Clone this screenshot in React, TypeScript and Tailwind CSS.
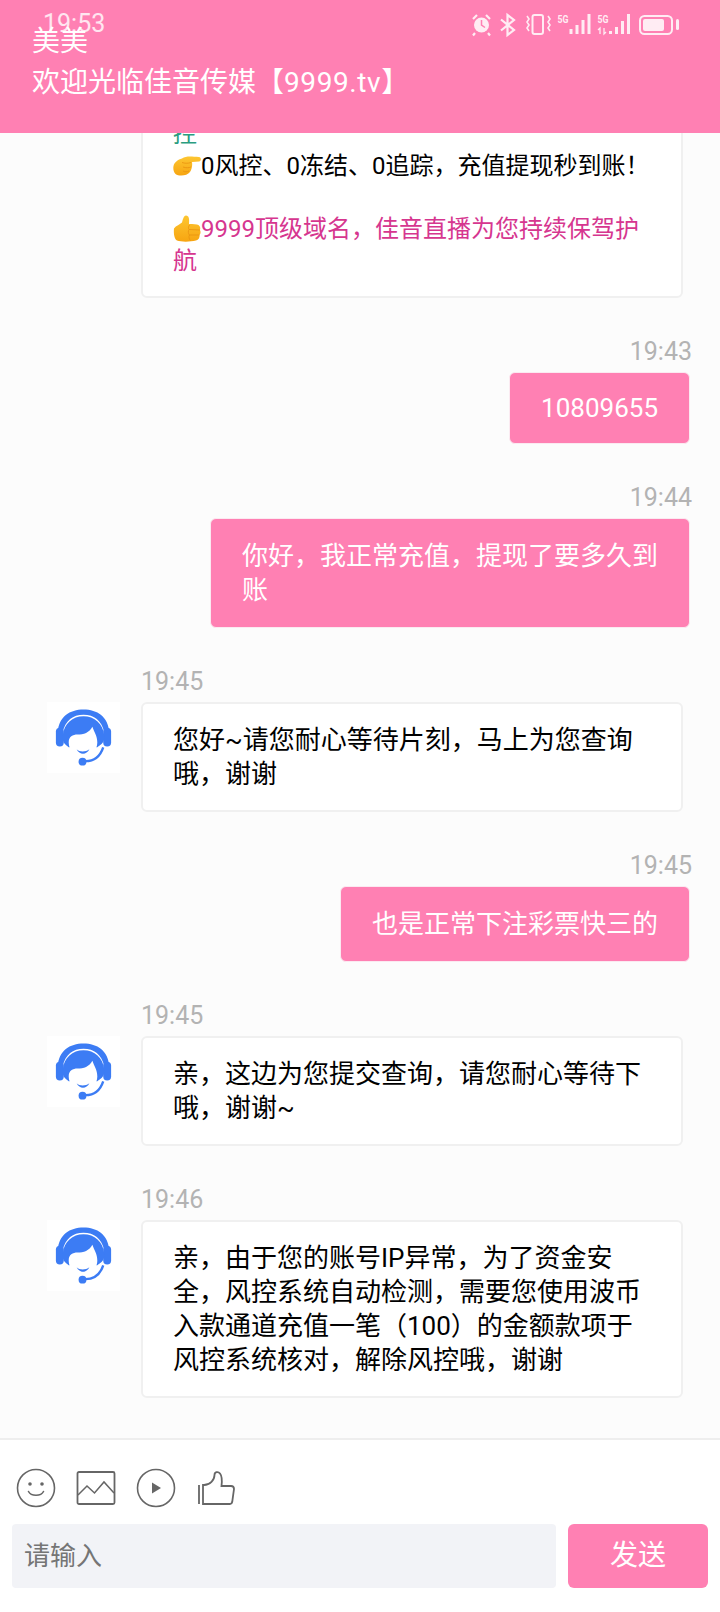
import { ReactNode } from 'react';

const font = "[font-family:Roboto,'Noto_Sans_CJK_SC',sans-serif]";

function StatusIcons() {
  return (
    <svg width="280" height="50" viewBox="0 0 280 50" fill="none" className="opacity-85">
      {/* alarm */}
      <circle cx="41.5" cy="25" r="7.5" fill="#fff" />
      <path d="M41.5 20v5l3.5 2.5" stroke="#ff80b3" strokeWidth="1.5" />
      <path d="M33 19l4-4M50 19l-4-4M35 33l-2 2.5M48 33l2 2.5" stroke="#fff" strokeWidth="2.2" />
      {/* bluetooth */}
      <path d="M61 19.500l13 10.500-6.500 5V15l6.500 5-13 10.500" stroke="#fff" strokeWidth="2.2" />
      {/* vibrate */}
      <rect x="92.500" y="15" width="10.500" height="19" rx="2" stroke="#fff" strokeWidth="2" />
      <path d="M87 16l2 3-2 3 2 3-2 3 2 3M108 16l2 3-2 3 2 3-2 3 2 3" stroke="#fff" strokeWidth="1.6" />
      {/* 5G */}
      <text x="117.500" y="23" fill="#fff" fontSize="11" fontWeight="700" fontFamily="Roboto, sans-serif" textLength="11" lengthAdjust="spacingAndGlyphs">5G</text>
      <path d="M129.500 29h3v5h-3zM135.500 25h3v9h-3zM141.500 20h3v14h-3zM147.500 14h3v20h-3z" fill="#fff" />
      <text x="157.500" y="23" fill="#fff" fontSize="11" fontWeight="700" fontFamily="Roboto, sans-serif" textLength="11" lengthAdjust="spacingAndGlyphs">5G</text>
      <path d="M160 34v-6l-2 2M164 28v6l2-2" stroke="#fff" strokeWidth="1.3" />
      <path d="M169 31h3v3h-3zM175 27h3v7h-3zM181 21h3v13h-3zM187 14h3v20h-3z" fill="#fff" />
      {/* battery */}
      <rect x="200" y="16" width="32" height="18" rx="4.500" stroke="#fff" strokeWidth="2" />
      <rect x="203" y="19" width="21" height="12" rx="2" fill="#fff" />
      <rect x="236" y="19" width="3" height="11" rx="1.500" fill="#fff" />
    </svg>
  );
}

function Avatar() {
  return (
    <div className="w-[73px] h-[71px] shrink-0 bg-white">
      <svg width="73" height="71" viewBox="0 0 72 72" fill="none">
        <path d="M10 30C11 15 22 7.500 36 7.500S61 15 62 30l-5 0C54 19 47 13 36 13S18 19 15 30Z" fill="#3c7cf4" />
        <rect x="8" y="26" width="8" height="19" rx="4" fill="#3c7cf4" />
        <rect x="56" y="26" width="8" height="19" rx="4" fill="#3c7cf4" />
        <path d="M15 34C16 22 25 14.500 36 14.500S56 22 57 34C58 42 52 44 50 46L21 46C19 44 14 42 15 34Z" fill="#3c7cf4" />
        <path d="M21 41C21 35 25 33 30 33C36 33 42 31 45 25C47 31 50 34 50 41C50 49 44 55 35.500 55S21 49 21 41Z" fill="#fff" />
        <path d="M29 48C32 51 38 51 42 48C39 54 32 54 29 48Z" fill="#3c7cf4" />
        <path d="M38 60C47 60 53 55 56 46" stroke="#3c7cf4" strokeWidth="2.400" />
        <circle cx="35" cy="60.500" r="4" fill="#3c7cf4" />
      </svg>
    </div>
  );
}

function PointEmoji() {
  return (
    <svg width="28" height="22" viewBox="0 0 28 22" className="inline-block align-[-2px]">
      <defs>
        <linearGradient id="pointFill" x1="0" y1="0" x2="0" y2="1">
          <stop offset="0" stopColor="#fdc631" />
          <stop offset="1" stopColor="#f7a511" />
        </linearGradient>
      </defs>
      <path d="M0.500 12C1.500 8 5 5.500 9 4.500C13 2 17 2.500 26 3C28.500 3.300 28.500 7.200 26 7.500L19 8C19.500 11 19 15 17 18C14 22 6 22.500 2.500 20C0.500 18 0 15 0.500 12Z" fill="url(#pointFill)" />
      <path d="M9 8.500C12 9.500 15 9.500 18 8.500M10 13C13 14 15.500 14 18 13M10 17C12 18 14 18 16 17" stroke="#e8920f" strokeWidth="0.800" fill="none" />
    </svg>
  );
}

function ThumbEmoji() {
  return (
    <svg width="28" height="27" viewBox="0 0 28 27" className="inline-block align-[-5px]">
      <defs>
        <linearGradient id="thumbFill" x1="0" y1="0" x2="0" y2="1">
          <stop offset="0" stopColor="#fdc631" />
          <stop offset="1" stopColor="#f7a511" />
        </linearGradient>
      </defs>
      <path d="M1 13.500C3 10.500 7 9.500 9 7.500C10 4 10.500 1 13 0.500C16 0.500 16.500 4 16 9C20 9 24 9 25.500 10C27.500 11.500 27.500 13.500 27 15C28 17 27.500 19 26.500 20C27 22.500 25.500 25 23 25.500C17 27 8 27 4 25.500C1 24 0.500 17 1 13.500Z" fill="url(#thumbFill)" />
      <path d="M16.500 10C15.500 11.500 15 13 16 14.500L27 15M16 14.500C15 16 15 18.500 16.500 20L26.500 20M16.500 20C15.500 22 16 24 17.500 25.500" stroke="#e8920f" strokeWidth="0.800" fill="none" />
    </svg>
  );
}

function Sent({ time, leading = 'leading-[34px]', children }: { time: string; leading?: string; children: ReactNode }) {
  return (
    <div className="flex flex-col items-end">
      <div className="h-6 mb-2 -mr-0.5 text-[25px] leading-6 text-[#b3b3b3]">{time}</div>
      <div className={`max-w-[480px] rounded-md border border-[#fbeaf1] bg-[#ff80b3] px-[31px] py-5 text-[26px] text-white ${leading}`}>
        {children}
      </div>
    </div>
  );
}

function Received({ time, children }: { time: string; children: ReactNode }) {
  return (
    <div className="flex flex-col">
      <div className="h-6 mb-2 ml-[94px] text-[25px] leading-6 text-[#b3b3b3]">{time}</div>
      <div className="flex items-start gap-[21px]">
        <Avatar />
        <div className="w-[542px] rounded-md border-2 border-[#f0f0f0] bg-white px-[30px] py-[19px] text-[26px] leading-[34px] text-black">
          {children}
        </div>
      </div>
    </div>
  );
}

export default function App() {
  return (
    <div className={`h-[1612px] w-[720px] flex flex-col overflow-hidden bg-white ${font}`}>
      {/* Header with the phone status bar lying over it */}
      <header className="relative z-10 h-[133px] shrink-0 bg-[#ff80b3] px-8 pt-[21px] text-[28px] leading-[41px] text-white">
        <div>美美</div>
        <div>欢迎光临佳音传媒【<span className="tracking-[0.6px]">9999.tv</span>】</div>
        <div className="absolute left-[43px] top-[10px] text-[25px] leading-7 text-white/80">19:53</div>
        <div className="absolute right-0 top-0">
          <StatusIcons />
        </div>
      </header>

      {/* Messages */}
      <main className="flex-1 min-h-0 overflow-hidden flex flex-col justify-end gap-[42px] bg-[#fcfcfc] pl-[47px] pr-[30px] pb-10">
        <div className="ml-[94px] w-[542px] shrink-0 rounded-md border-2 border-[#f0f0f0] bg-white px-[30px] py-[19px] text-2xl leading-8 text-black">
          <div className="text-[#2a9d80]">控</div>
          <div><PointEmoji />0风控、0冻结、0追踪，充值提现秒到账！</div>
          <div className="h-[31px]" />
          <div className="text-[#d6368f]"><ThumbEmoji />9999顶级域名，佳音直播为您持续保驾护航</div>
        </div>
        <Sent time="19:43" leading="leading-[30px]">10809655</Sent>
        <Sent time="19:44">你好，我正常充值，提现了要多久到账</Sent>
        <Received time="19:45">您好~请您耐心等待片刻，马上为您查询哦，谢谢</Received>
        <Sent time="19:45">也是正常下注彩票快三的</Sent>
        <Received time="19:45">亲，这边为您提交查询，请您耐心等待下哦，谢谢~</Received>
        <Received time="19:46">亲，由于您的账号IP异常，为了资金安全，风控系统自动检测，需要您使用波币入款通道充值一笔（100）的金额款项于风控系统核对，解除风控哦，谢谢</Received>
      </main>

      {/* Input area */}
      <footer className="shrink-0 border-t-2 border-[#eeeeee] bg-white pt-7 pb-6">
        <div className="flex items-center gap-5 pl-4">
          <svg width="40" height="40" viewBox="0 0 40 40" fill="none" stroke="#666" strokeWidth="1.6">
            <circle cx="20" cy="20" r="18.500" />
            <circle cx="14" cy="16" r="1.800" fill="#666" stroke="none" />
            <circle cx="26" cy="16" r="1.800" fill="#666" stroke="none" />
            <path d="M12.500 23.500C15 28.500 25 28.500 27.500 23.500" strokeLinecap="round" />
          </svg>
          <svg width="40" height="40" viewBox="0 0 40 40" fill="none" stroke="#666" strokeWidth="1.800">
            <rect x="1.500" y="4" width="37" height="32" rx="1.500" />
            <path d="M2 27L11 18L18.500 25L28 14L38 25" strokeWidth="1.500" />
          </svg>
          <svg width="40" height="40" viewBox="0 0 40 40" fill="none" stroke="#666" strokeWidth="1.600">
            <circle cx="20" cy="20" r="18.500" />
            <path d="M16 14.500L25 20L16 25.500Z" fill="#666" stroke="none" />
          </svg>
          <svg width="40" height="40" viewBox="0 0 40 40" fill="none" stroke="#666" strokeWidth="1.800">
            <path d="M3 17V36M7 36H34C35.500 36 36 35 36.200 34L38 21C38 19 37 18 35 18H25.500C26 14 26 8 24 5.500C22 3 18.500 4 18.500 7C18.500 12 14 17 8 17H7Z" />
          </svg>
        </div>
        <div className="mt-4 flex gap-3 pl-3 pr-3">
          <input
            placeholder="请输入"
            className="h-16 w-[544px] rounded-sm bg-[#f2f3f7] px-3 text-[26px] text-[#333] placeholder:text-[#757575] outline-none"
          />
          <button className="h-16 w-[140px] rounded-md bg-[#ff80b3] text-[28px] text-white">发送</button>
        </div>
      </footer>
    </div>
  );
}
